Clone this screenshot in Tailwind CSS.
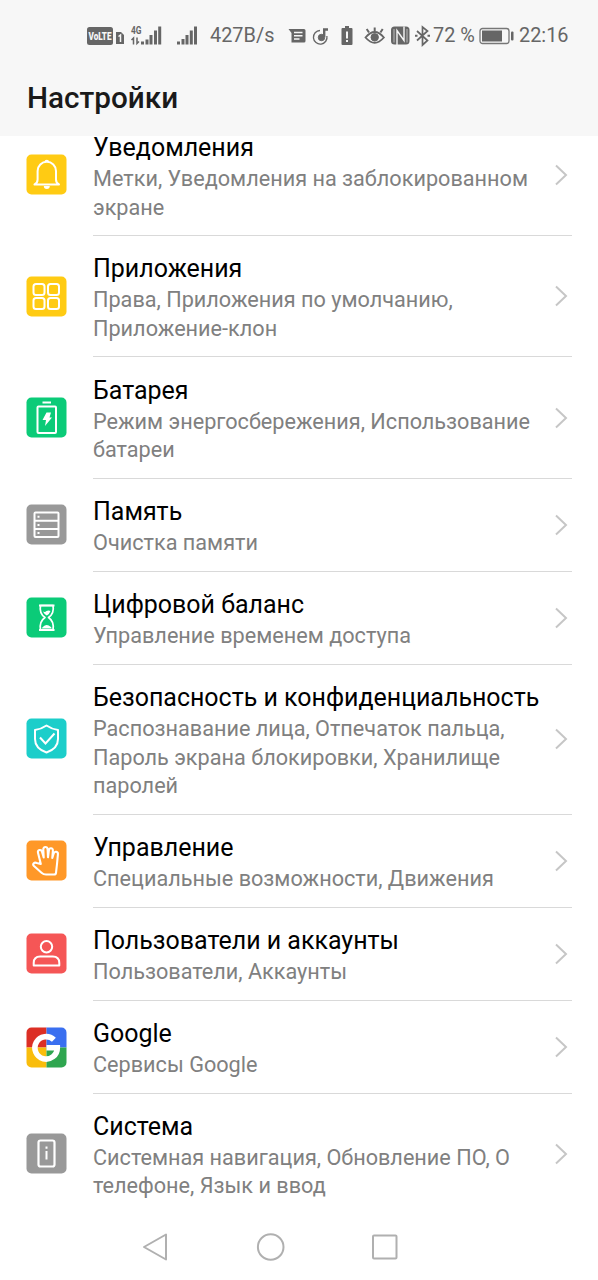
<!DOCTYPE html>
<html lang="ru">
<head>
<meta charset="utf-8">
<title>Настройки</title>
<script src="https://cdn.jsdelivr.net/npm/@tailwindcss/browser@4"></script>
</head>
<body class="bg-white font-['Roboto','Noto_Sans',sans-serif]">
<svg class="hidden">
  <symbol id="chev" viewBox="0 0 14 22"><path d="M2 1.5L12 11L2 20.5" fill="none" stroke="#c6c6c6" stroke-width="2"/></symbol>
</svg>
<div class="flex h-[1280px] w-[598px] flex-col overflow-hidden">
  <header class="h-[136px] shrink-0 bg-[#f7f7f7]">
    <div class="flex h-[70px] items-center pl-[87px] pt-px text-[19.900px] text-[#666]">
      <svg class="h-[30px] w-[76px] shrink-0" viewBox="0 0 76 30">
        <rect x="0" y="6" width="26" height="18" rx="2.500" fill="#666"/>
        <text x="1.500" y="19" font-size="11" font-weight="900" fill="#f7f7f7" textLength="23" lengthAdjust="spacingAndGlyphs">VoLTE</text>
        <path d="M29 11h5l3 3v9h-8z" fill="#666"/><path d="M31.500 15.500l2-1.500v7" fill="none" stroke="#f7f7f7" stroke-width="1.500"/>
        <text x="44" y="13" font-size="10.500" font-weight="700" fill="#666" textLength="10.500" lengthAdjust="spacingAndGlyphs">4G</text>
        <path d="M44.500 19l2-2v6.500M50 16.500v6l2-2" fill="none" stroke="#666" stroke-width="1.500"/>
        <path d="M54 20.500h3v3h-3zM58.500 18.500h3v5h-3zM62.500 14h3v9.500h-3zM67 9.500h3v14h-3zM71.200 5.500h3v18h-3z" fill="#666"/>
      </svg>
      <svg class="ml-[14px] h-[30px] w-[20px] shrink-0" viewBox="0 0 20 30"><path d="M0 20.500h3v3h-3zM4.500 18h3v5.500h-3zM8.500 14h3v9.500h-3zM12.800 9.500h3v14h-3zM17 5.500h3v18h-3z" fill="#666"/></svg>
      <span class="ml-[13px] w-[69px] whitespace-nowrap">427B/s</span>
      <svg class="ml-[8px] h-[30px] w-[146px] shrink-0" viewBox="0 0 146 30" fill="none" stroke="#666">
        <path d="M1.500 8H17q1.500 0 1.500 1.500v10.500q0 1.500-1.500 1.500H4.500V12z" fill="#666" stroke="none"/>
        <path d="M7 11.500h8.500M7 14.800h8.500M7 18h5.500" stroke="#f7f7f7" stroke-width="1.400"/>
        <path d="M33 9.500A6.800 6.800 0 1 0 39.900 15" stroke-width="1.300"/>
        <circle cx="34.500" cy="16.500" r="3.200" fill="#666"/><path d="M37.200 16V8.500H41" stroke-width="2.400"/>
        <path d="M54.500 8q0-1 1-1h2.500V5h4v2h2.500q1 0 1 1v15q0 1-1 1h-9q-1 0-1-1z" fill="#666" stroke="none"/>
        <path d="M60 10.500v7M60 19v2" stroke="#f7f7f7" stroke-width="2"/>
        <path d="M78.500 16.500q9.200-11 18.400 0q-9.200 10.500-18.400 0z" stroke-width="1.800"/>
        <circle cx="87.700" cy="16.300" r="3.700" fill="#666"/><path d="M87.700 10V6.500M82 11.500L79.700 8M93.400 11.500L95.700 8" stroke-width="2"/>
        <rect x="104" y="5.500" width="18.500" height="18" rx="3.500" fill="#666" stroke="none"/>
        <path d="M110 24V9.500L117 19.500V5.500" stroke="#f7f7f7" stroke-width="1.400"/>
        <path d="M107 8v13.500M120 8v13.500" stroke="#f7f7f7" stroke-width=".6"/>
        <path d="M130 10l10.500 9.500-5 4.500V6l5 4L130 19.500" stroke-width="1.700"/>
        <path d="M128 14.800h2.500M140.500 14.800h2.500" stroke-width="2"/>
      </svg>
      <span class="w-[42px] whitespace-nowrap">72 %</span>
      <svg class="ml-[4px] h-[18px] w-[36px] shrink-0" viewBox="0 0 36 18"><rect x="1" y="1.500" width="29" height="15" rx="2.500" fill="none" stroke="#777" stroke-width="1.300"/><rect x="3" y="3.500" width="20" height="11" fill="#666"/><rect x="32" y="4.500" width="2.500" height="9" rx="1" fill="#666"/></svg>
      <span class="ml-[4px] whitespace-nowrap">22:16</span>
    </div>
    <h1 class="pl-[27px] pt-[10px] text-[29.700px] font-medium leading-[36px] text-[#1a1a1a]">Настройки</h1>
  </header>

  <main class="h-[1066px] shrink-0 overflow-hidden text-[21.670px] leading-[28.300px] text-[#808080]">
    <div class="-mt-[21.500px] flex h-[121.500px] items-center pl-[26px]">
      <svg class="mb-[1px] size-[41px] shrink-0" viewBox="0 0 41 41"><rect x=".5" y=".5" width="40" height="40" rx="5" fill="#ffcb13"/><g fill="none" stroke="#fff" stroke-width="2" stroke-linejoin="round"><path d="M8.500 30.500h24.500q-3-1.500-3-5v-8.500a9.200 9.200 0 0 0-18.400 0v8.500q0 3.500-3.100 5z"/></g><path d="M18.500 8a2.300 2.300 0 0 1 4.600 0zM17.800 32h6a3 3 0 0 1-6 0z" fill="#fff"/></svg>
      <div class="ml-[26px] flex h-full w-[479px] items-center border-b border-[#d9d9d9]"><div class="w-[450px] whitespace-nowrap pt-[4px]"><h2 class="text-[24.970px] leading-[34px] text-black">Уведомления</h2><p>Метки, Уведомления на заблокированном<br>экране</p></div><svg class="ml-[11px] h-[22px] w-[14px] shrink-0"><use href="#chev"/></svg></div>
    </div>
    <div class="flex h-[121.400px] items-center pl-[26px]">
      <svg class="mb-[1px] size-[41px] shrink-0" viewBox="0 0 41 41"><rect x=".5" y=".5" width="40" height="40" rx="5" fill="#ffcb13"/><g fill="none" stroke="#fff" stroke-width="2"><rect x="7.500" y="8" width="11" height="11" rx="2.500"/><rect x="22" y="8" width="11" height="11" rx="2.500"/><rect x="7.500" y="22" width="11" height="11" rx="2.500"/><rect x="22" y="22" width="11" height="11" rx="2.500"/></g></svg>
      <div class="ml-[26px] flex h-full w-[479px] items-center border-b border-[#d9d9d9]"><div class="w-[450px] whitespace-nowrap pt-[3px]"><h2 class="text-[24.970px] leading-[34px] text-black">Приложения</h2><p>Права, Приложения по умолчанию,<br>Приложение-клон</p></div><svg class="ml-[11px] h-[22px] w-[14px] shrink-0"><use href="#chev"/></svg></div>
    </div>
    <div class="flex h-[121.400px] items-center pl-[26px]">
      <svg class="mb-[2px] size-[41px] shrink-0" viewBox="0 0 41 41"><rect x=".5" y=".5" width="40" height="40" rx="5" fill="#0bcb78"/><rect x="11.500" y="9.500" width="18.500" height="26.500" rx="1" fill="none" stroke="#fff" stroke-width="2"/><path d="M16.500 4.500h8.500v2h-8.500zM20.500 15.500h4.500l-1.500 5h2.500l-7 8.500 1-6h-3.500z" fill="#fff"/></svg>
      <div class="ml-[26px] flex h-full w-[479px] items-center border-b border-[#d9d9d9]"><div class="w-[450px] whitespace-nowrap pt-[3px]"><h2 class="text-[24.970px] leading-[34px] text-black">Батарея</h2><p>Режим энергосбережения, Использование<br>батареи</p></div><svg class="ml-[11px] h-[22px] w-[14px] shrink-0"><use href="#chev"/></svg></div>
    </div>
    <div class="flex h-[93.100px] items-center pl-[26px]">
      <svg class="mb-[1px] size-[41px] shrink-0" viewBox="0 0 41 41"><rect x=".5" y=".5" width="40" height="40" rx="5" fill="#999"/><rect x="8.500" y="8.500" width="24" height="24.500" rx="1" fill="none" stroke="#fff" stroke-width="2"/><path d="M8.500 16.700h24M8.500 24.900h24" stroke="#fff" stroke-width="2"/><path d="M11.500 11.800h2v2h-2zM11.500 20h2v2h-2zM11.500 28h2v2h-2z" fill="#fff"/></svg>
      <div class="ml-[26px] flex h-full w-[479px] items-center border-b border-[#d9d9d9]"><div class="w-[450px] whitespace-nowrap pt-[2.500px]"><h2 class="text-[24.970px] leading-[34px] text-black">Память</h2><p>Очистка памяти</p></div><svg class="ml-[11px] h-[22px] w-[14px] shrink-0"><use href="#chev"/></svg></div>
    </div>
    <div class="flex h-[93.100px] items-center pl-[26px]">
      <svg class="mb-[1px] size-[41px] shrink-0" viewBox="0 0 41 41"><rect x=".5" y=".5" width="40" height="40" rx="5" fill="#0bcb78"/><path d="M14.500 8.500h12.500q1.500 8-4.500 12q6 4 4.500 12.500H14.500q-1.500-8.500 4.500-12.500q-6-4-4.500-12z" fill="none" stroke="#fff" stroke-width="1.700" stroke-linejoin="round"/><path d="M13 8.500h15.500M13 33h15.500" stroke="#fff" stroke-width="1.800"/><path d="M17 14.500q2 1 3.500-.5 2-1 4 0-1 3-3.700 4.500-2.800-1.500-3.800-4zM16 31.500q.5-2.500 4.700-3.500 4.500 1 5 3.500z" fill="#fff"/></svg>
      <div class="ml-[26px] flex h-full w-[479px] items-center border-b border-[#d9d9d9]"><div class="w-[450px] whitespace-nowrap pt-[2.500px]"><h2 class="text-[24.970px] leading-[34px] text-black">Цифровой баланс</h2><p>Управление временем доступа</p></div><svg class="ml-[11px] h-[22px] w-[14px] shrink-0"><use href="#chev"/></svg></div>
    </div>
    <div class="flex h-[149.800px] items-center pl-[26px]">
      <svg class="mb-[2px] size-[41px] shrink-0" viewBox="0 0 41 41"><rect x=".5" y=".5" width="40" height="40" rx="5" fill="#1cceca"/><g fill="none" stroke="#fff" stroke-width="2"><path d="M20.500 7.500q5.500 3.800 11.500 4.500v9q0 9.500-11.500 13.500q-11.500-4-11.500-13.500v-9q6-.7 11.500-4.500z" stroke-linejoin="round"/><path d="M14 19.500l5.500 6 9-10"/></g></svg>
      <div class="ml-[26px] flex h-full w-[479px] items-center border-b border-[#d9d9d9]"><div class="w-[450px] whitespace-nowrap pt-[3px]"><h2 class="text-[24.970px] leading-[34px] text-black">Безопасность и конфиденциальность</h2><p>Распознавание лица, Отпечаток пальца,<br>Пароль экрана блокировки, Хранилище<br>паролей</p></div><svg class="ml-[11px] h-[22px] w-[14px] shrink-0"><use href="#chev"/></svg></div>
    </div>
    <div class="flex h-[93.100px] items-center pl-[26px]">
      <svg class="mb-[2px] size-[41px] shrink-0" viewBox="0 0 41 41"><rect x=".5" y=".5" width="40" height="40" rx="5" fill="#ff9828"/><path d="M14.800 24L12 12.800c-.7-3 3.300-4 4-1L17.700 17.500 17.300 9.500c-.2-3.200 4-3.300 4.300-.2l.4 8 .9-7c.3-3 4.300-2.700 4 .3L26.300 18l1.400-4.500c.9-2.800 4.600-2 4.200.8L31 24l-1 8.800q-.2 1.700-2 1.700H20q-2.500 0-4.500-1.800L8 26c-2-2 .5-4.300 2.700-3z" fill="none" stroke="#fff" stroke-width="2.100" stroke-linejoin="round"/></svg>
      <div class="ml-[26px] flex h-full w-[479px] items-center border-b border-[#d9d9d9]"><div class="w-[450px] whitespace-nowrap pt-[2.500px]"><h2 class="text-[24.970px] leading-[34px] text-black">Управление</h2><p>Специальные возможности, Движения</p></div><svg class="ml-[11px] h-[22px] w-[14px] shrink-0"><use href="#chev"/></svg></div>
    </div>
    <div class="flex h-[93.100px] items-center pl-[26px]">
      <svg class="mb-[1px] size-[41px] shrink-0" viewBox="0 0 41 41"><rect x=".5" y=".5" width="40" height="40" rx="5" fill="#f55656"/><g fill="none" stroke="#fff" stroke-width="2"><circle cx="20.500" cy="13.800" r="5.700"/><path d="M7.700 32.500v-2.500q0-6.500 6.500-6.500h12.600q6.500 0 6.500 6.500v2.500z" stroke-linejoin="round"/></g></svg>
      <div class="ml-[26px] flex h-full w-[479px] items-center border-b border-[#d9d9d9]"><div class="w-[450px] whitespace-nowrap pt-[2.500px]"><h2 class="text-[24.970px] leading-[34px] text-black">Пользователи и аккаунты</h2><p>Пользователи, Аккаунты</p></div><svg class="ml-[11px] h-[22px] w-[14px] shrink-0"><use href="#chev"/></svg></div>
    </div>
    <div class="flex h-[93.100px] items-center pl-[26px]">
      <svg class="mb-[1px] size-[41px] shrink-0" viewBox="0 0 41 41"><path d="M20.500.5H5.500a5 5 0 0 0-5 5v15h20z" fill="#dc2f25"/><path d="M20.500.5h15a5 5 0 0 1 5 5v15h-20z" fill="#3a6ff0"/><path d="M.5 20.500v15a5 5 0 0 0 5 5h15v-20z" fill="#f9bd0c"/><path d="M40.500 20.500v15a5 5 0 0 1-5 5h-15v-20z" fill="#2fa650"/><path d="M27.900 12.800A11.200 11.200 0 1 0 31.300 20.700H20.500" fill="none" stroke="#fff" stroke-width="5.600"/></svg>
      <div class="ml-[26px] flex h-full w-[479px] items-center border-b border-[#d9d9d9]"><div class="w-[450px] whitespace-nowrap pt-[2.500px]"><h2 class="text-[24.970px] leading-[34px] text-black">Google</h2><p>Сервисы Google</p></div><svg class="ml-[11px] h-[22px] w-[14px] shrink-0"><use href="#chev"/></svg></div>
    </div>
    <div class="flex h-[120.500px] items-center pl-[26px]">
      <svg class="mb-[1px] size-[41px] shrink-0" viewBox="0 0 41 41"><rect x=".5" y=".5" width="40" height="40" rx="5" fill="#999"/><rect x="12.500" y="7.500" width="16" height="26" rx="2" fill="none" stroke="#fff" stroke-width="2.200"/><path d="M19.500 13.500h2v2.300h-2zM19.500 18h2v8.500h-2z" fill="#fff"/></svg>
      <div class="ml-[26px] flex h-full w-[479px] items-center"><div class="w-[450px] whitespace-nowrap pt-[2px]"><h2 class="text-[24.970px] leading-[34px] text-black">Система</h2><p>Системная навигация, Обновление ПО, О<br>телефоне, Язык и ввод</p></div><svg class="ml-[11px] h-[22px] w-[14px] shrink-0"><use href="#chev"/></svg></div>
    </div>
  </main>
  <nav class="flex h-[78px] items-center pl-[142px] pt-[11px]">
    <svg class="h-[30px] w-[258px]" viewBox="0 0 258 30" fill="none" stroke="#b0b0b0" stroke-width="2" stroke-linejoin="round"><path d="M2 15L24 2.500v25z"/><circle cx="128.700" cy="15" r="12.800"/><rect x="231" y="3.500" width="23.500" height="23" rx="1"/></svg>
  </nav>
</div>
</body>
</html>
